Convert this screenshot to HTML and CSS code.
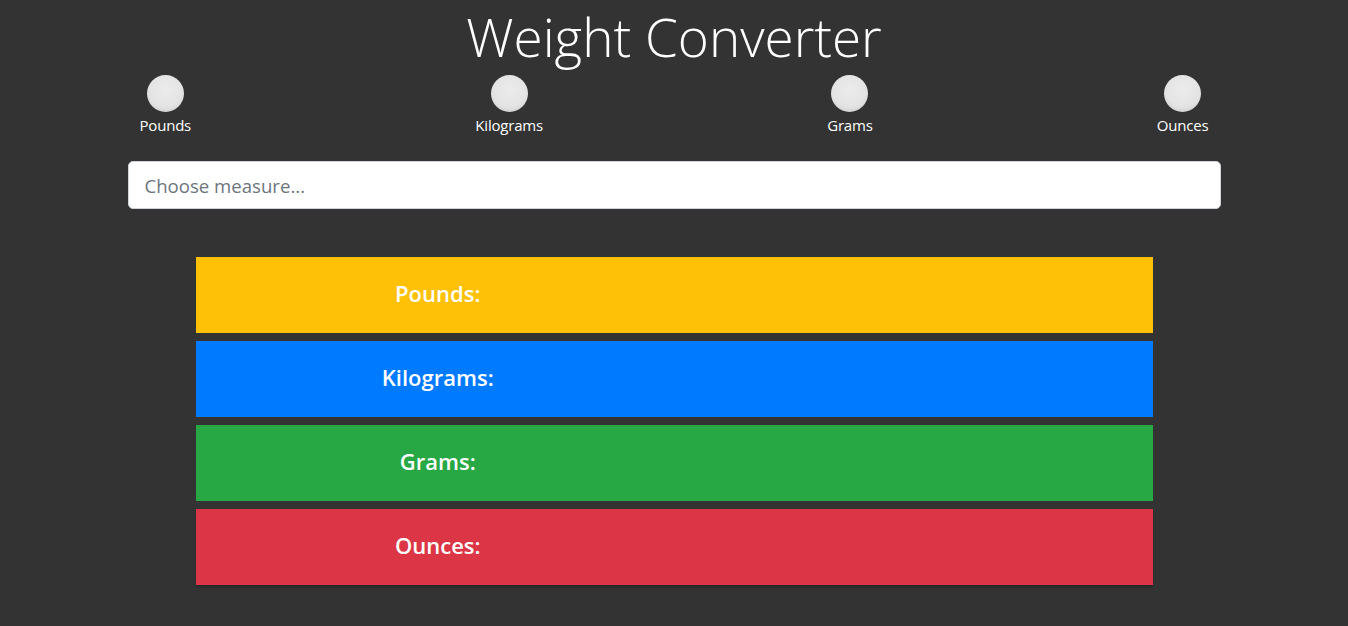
FILE: index.html
```html
<!DOCTYPE html>
<html lang="en">
<head>
<meta charset="utf-8">
<title>Weight Converter</title>
<link rel="stylesheet" href="styles.css">
</head>
<body>
<h1 class="title">Weight Converter</h1>
<div class="container">
  <div class="options">
    <label class="option"><span class="radio"></span><span class="opt-text">Pounds</span></label>
    <label class="option"><span class="radio"></span><span class="opt-text">Kilograms</span></label>
    <label class="option"><span class="radio"></span><span class="opt-text">Grams</span></label>
    <label class="option"><span class="radio"></span><span class="opt-text">Ounces</span></label>
  </div>
  <input class="measure" type="text" placeholder="Choose measure...">
</div>
<div class="results">
  <div class="card card-yellow"><div class="card-label">Pounds:</div><div class="card-value"></div></div>
  <div class="card card-blue"><div class="card-label">Kilograms:</div><div class="card-value"></div></div>
  <div class="card card-green"><div class="card-label">Grams:</div><div class="card-value"></div></div>
  <div class="card card-red"><div class="card-label">Ounces:</div><div class="card-value"></div></div>
</div>
</body>
</html>
```
FILE: styles.css
```css
html, body {
  margin: 0;
  padding: 0;
}
body {
  background: #333333;
  color: #ffffff;
  font-family: "Open Sans", "Noto Sans", sans-serif;
  height: 626px;
  overflow: hidden;
}
.title {
  margin: 0;
  text-align: center;
  font-weight: 300;
  font-size: 53px;
  line-height: 74px;
  height: 75px;
}
.container {
  width: 1093px;
  margin: 0 auto;
  padding: 0 12px;
  box-sizing: border-box;
}
.options {
  display: flex;
  justify-content: space-between;
}
.option {
  display: flex;
  flex-direction: column;
  align-items: center;
}
.radio {
  width: 37px;
  height: 37px;
  border-radius: 50%;
  box-sizing: border-box;
  background: radial-gradient(circle at 50% 40%, #ececec 0%, #e3e3e3 60%, #c9c9c9 90%, #b5b5b5 100%);
}
.opt-text {
  font-size: 15px;
  line-height: 20px;
  margin-top: 3px;
  letter-spacing: -0.2px;
}
.measure {
  display: block;
  box-sizing: border-box;
  height: 48px;
  margin: 26px 0 0 -12px;
  width: 1093px;
  border: 1px solid #ced4da;
  border-radius: 5px;
  padding: 0 16px;
  font-family: "Open Sans", "Noto Sans", sans-serif;
  font-size: 18.6px;
  color: #495057;
  background: #ffffff;
  outline: none;
}
.measure::placeholder {
  color: #6c757d;
}
.results {
  width: 957px;
  margin: 48px auto 0;
  display: flex;
  flex-direction: column;
  gap: 8px;
}
.card {
  height: 76px;
  display: flex;
  align-items: center;
}
.card-label {
  width: 50%;
  box-sizing: border-box;
  padding: 0 0 4px 6px;
  text-align: center;
  font-weight: 600;
  font-size: 22px;
}
.card-yellow { background: #ffc107; }
.card-blue { background: #007bff; }
.card-green { background: #28a745; }
.card-red { background: #dc3545; box-shadow: 0 2px 2px rgba(0,0,0,0.25); }
```
